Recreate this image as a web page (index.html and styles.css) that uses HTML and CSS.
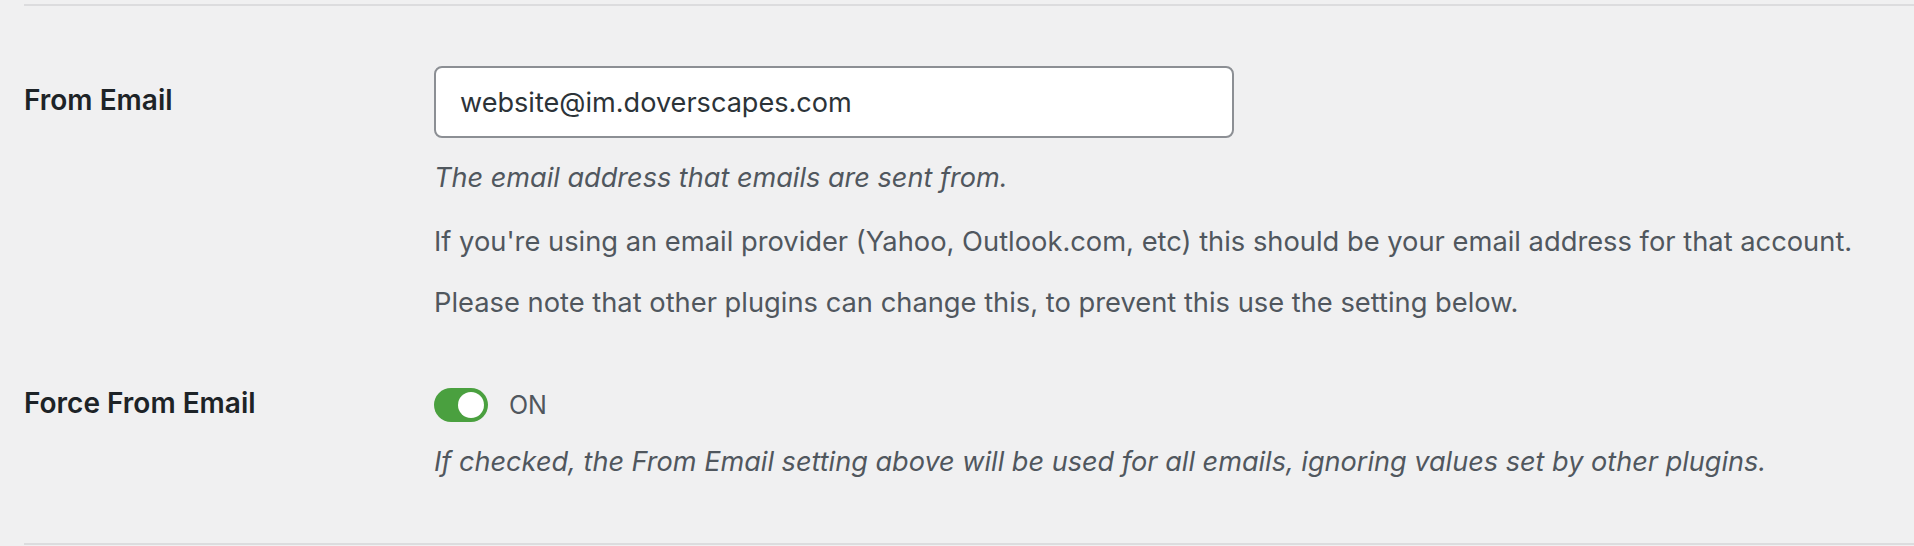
FILE: index.html
```html
<!DOCTYPE html>
<html lang="en">
<head>
<meta charset="utf-8">
<title>Mail settings</title>
<link rel="stylesheet" href="styles.css">
</head>
<body>
<div class="settings">
  <div class="rule"></div>
  <div class="row row-first">
    <label class="label" for="from-email">From Email</label>
    <div class="control">
      <input class="text-input" id="from-email" type="text" value="website@im.doverscapes.com">
    </div>
    <div class="notes">
      <p class="desc em">The email address that emails are sent from.</p>
      <p class="desc gap">If you're using an email provider (Yahoo, Outlook.com, etc) this should be your email address for that account.</p>
      <p class="desc">Please note that other plugins can change this, to prevent this use the setting below.</p>
    </div>
  </div>
  <div class="row row-last">
    <div class="label">Force From Email</div>
    <div class="control toggle-line">
      <span class="switch"><span class="knob"></span></span>
      <span class="state">ON</span>
    </div>
    <div class="notes">
      <p class="desc em">If checked, the From Email setting above will be used for all emails, ignoring values set by other plugins.</p>
    </div>
  </div>
  <div class="rule"></div>
</div>
</body>
</html>
```
FILE: styles.css
```css
html, body {
  margin: 0;
  padding: 0;
  background: #f0f0f1;
}
body {
  font-family: Inter, "Noto Sans", sans-serif;
  color: #1d2327;
}
.settings {
  padding: 4px 0 0 24px;
}
.rule {
  height: 2px;
  background: #dcdcde;
}
.row {
  display: grid;
  grid-template-columns: 410px 1fr;
  column-gap: 0;
}
.row-first {
  padding: 60px 0 32px;
}
.row-last {
  padding: 32px 0 60px;
}
.label {
  grid-column: 1;
  grid-row: 1;
  align-self: center;
  margin-bottom: 5px;
  font-size: 28px;
  line-height: 28px;
  font-weight: 600;
  color: #1d2327;
}
.control {
  grid-column: 2;
  grid-row: 1;
}
.notes {
  grid-column: 2;
  grid-row: 2;
}
.text-input {
  display: block;
  box-sizing: border-box;
  width: 800px;
  height: 72px;
  margin: 0;
  padding: 0 24px;
  border: 2px solid #8c8f94;
  border-radius: 8px;
  background: #fff;
  font-family: Inter, "Noto Sans", sans-serif;
  font-size: 27.1px;
  color: #2c3338;
  outline: none;
}
.desc {
  margin: 19px 0 0;
  font-size: 27.3px;
  line-height: 42px;
  color: #50575e;
}
.desc.gap {
  margin-top: 22px;
}
.desc.em {
  font-style: italic;
  font-size: 27.1px;
}
.toggle-line {
  display: flex;
  align-items: center;
  gap: 21px;
}
.switch {
  display: flex;
  align-items: center;
  justify-content: flex-end;
  box-sizing: border-box;
  width: 54px;
  height: 34px;
  padding: 0 4px;
  border-radius: 17px;
  background: #4aa03f;
}
.knob {
  width: 26px;
  height: 26px;
  border-radius: 50%;
  background: #fff;
}
.state {
  font-size: 25px;
  color: #50575e;
}
```
